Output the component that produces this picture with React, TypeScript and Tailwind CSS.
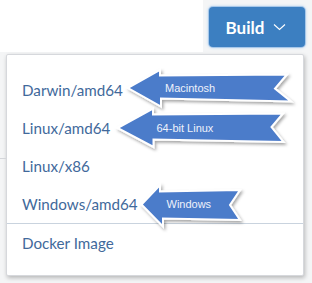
import React from "react";

type Arrow = {
  pts: [number, number][];
  label: string;
  tx: number;
  ty: number;
};

const arrows: Arrow[] = [
  {
    pts: [
      [128, 88],
      [160, 70],
      [160, 75.5],
      [287, 74.5],
      [275, 88.5],
      [291, 101.5],
      [161, 98.5],
      [161, 106.5],
    ],
    label: "Macintosh",
    tx: 165,
    ty: 92,
  },
  {
    pts: [
      [117.5, 128],
      [153, 108.5],
      [153, 114.5],
      [283, 113.5],
      [271.5, 127],
      [283.5, 142],
      [153.5, 139.5],
      [153.5, 147],
    ],
    label: "64-bit Linux",
    tx: 156.5,
    ty: 132,
  },
  {
    pts: [
      [141.5, 204.5],
      [160, 185],
      [160, 191.5],
      [240, 190],
      [230, 205],
      [240, 220],
      [163, 218.5],
      [163, 226.5],
    ],
    label: "Windows",
    tx: 166.5,
    ty: 208,
  },
];

const items = ["Darwin/amd64", "Linux/amd64", "Linux/x86", "Windows/amd64"];

export default function App() {
  return (
    <div className="relative w-[312px] h-[283px] bg-[#f4f5f6] overflow-hidden" style={{ fontFamily: "'Source Sans Pro', Lato, 'Noto Sans', sans-serif" }}>
      <div className="absolute left-0 top-[158px] w-[6px] h-px bg-[#d4d6da]" />
      <div className="flex h-[54px]">
        <div className="w-[203px] h-[52px] bg-white" />
        <button className="ml-[6px] mt-[7px] w-[96px] h-[40px] rounded-[4px] bg-[#3c7fc1] shadow-[0_0_0_1px_#a7c8ea,0_0_3px_1px_#bcd6f1] flex items-center justify-center gap-[9px] text-white font-bold text-[17px] pr-[2px]">
          <span className="leading-none">Build</span>
          <svg width="13" height="8" viewBox="0 0 13 8" fill="none">
            <path d="M1 1.5 L6.5 6.5 L12 1.5" stroke="white" strokeWidth="1.1" />
          </svg>
        </button>
      </div>
      <div className="ml-[6px] w-[298px] h-[222px] bg-white border border-[#d6d8dc] rounded-[2px] shadow-[1px_2px_4px_rgba(0,0,0,0.25)] pt-[16px] flex flex-col">
        {items.map((t) => (
          <div key={t} className="h-[38px] flex items-center pl-[15px] text-[15.2px] text-[#41699b]">
            {t}
          </div>
        ))}
        <div className="h-px bg-[#c9d3de]" />
        <div className="h-[38px] flex items-center pl-[15px] text-[15.2px] text-[#41699b]">Docker Image</div>
      </div>
      <svg className="absolute left-0 top-0 pointer-events-none" width="312" height="283" viewBox="0 0 312 283">
        <defs>
          <filter id="sh" x="-20%" y="-40%" width="140%" height="180%">
            <feDropShadow dx="1.5" dy="2" stdDeviation="1.5" floodColor="#000" floodOpacity="0.35" />
          </filter>
        </defs>
        {arrows.map((a) => (
          <g key={a.label}>
            <polygon
              points={a.pts.map((p) => p.join(",")).join(" ")}
              fill="#4c7bca"
              stroke="#ffffff"
              strokeWidth="2"
              strokeLinejoin="miter"
              filter="url(#sh)"
            />
            <text x={a.tx} y={a.ty} fill="#eef2fb" fontSize="11" fontFamily="'Liberation Sans', Arial, sans-serif">
              {a.label}
            </text>
          </g>
        ))}
      </svg>
    </div>
  );
}
